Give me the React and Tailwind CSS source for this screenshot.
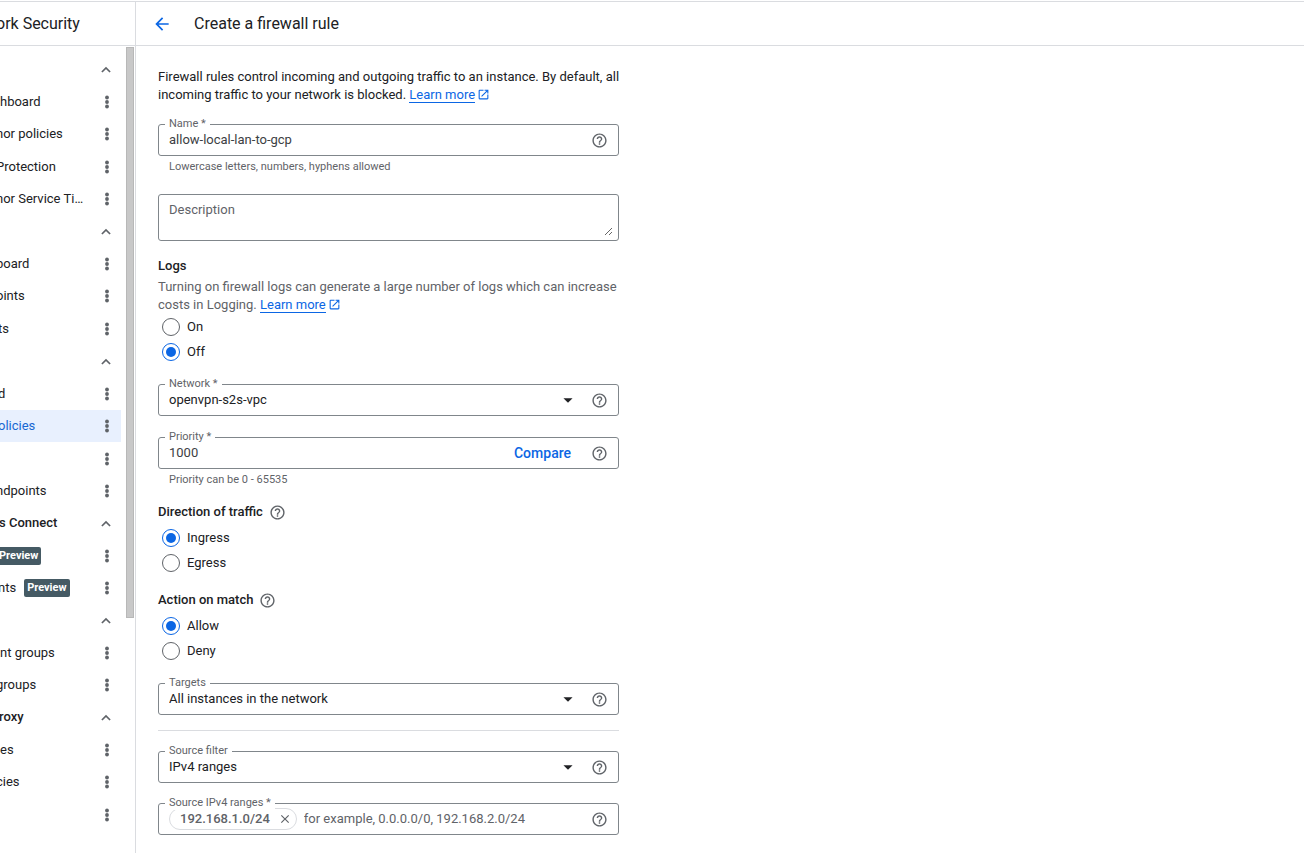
import { useState } from "react";
import { MdHelpOutline, MdArrowBack, MdOpenInNew, MdClose, MdArrowDropDown } from "react-icons/md";

const groups = [
  ["", [["hboard", "whole"], ["nor policies"], ["Protection"], ["nor Service Ti…"]]],
  ["", [["board"], ["oints"], ["ts"]]],
  ["", [["d"], ["olicies", "active"], [""], ["ndpoints"]]],
  ["s Connect", [["", "badge"], ["nts", "badge"]]],
  ["", [["nt groups", "whole"], ["groups"]]],
  ["roxy", [["es", "whole"], ["cies"], [""]]],
];

function MoreDots() {
  return (
    <svg width="18" height="18" viewBox="0 0 18 18" fill="currentColor" aria-hidden="true">
      <circle cx="9" cy="4.5" r="1.9" />
      <circle cx="9" cy="9" r="1.9" />
      <circle cx="9" cy="13.5" r="1.9" />
    </svg>
  );
}

function ChevronUp() {
  return (
    <svg width="16" height="16" viewBox="0 0 16 16" fill="none" stroke="currentColor" strokeWidth="1.7" aria-hidden="true">
      <path d="M3.9 11 8 6.9l4.1 4.1" />
    </svg>
  );
}

function Sidebar() {
  return (
    <aside className="flex w-[136px] shrink-0 flex-col overflow-hidden border-r border-[#dadce0]">
      <div className="flex h-11 items-center border-b border-[#dadce0]">
        <h2 className="-ml-1 whitespace-nowrap text-base">ork Security</h2>
      </div>
      <div className="flex justify-between">
        <nav className="w-[121px] overflow-hidden pt-[7px]" aria-label="Products">
          {groups.map(([title, items], g) => (
            <ul key={g}>
              <li className="flex h-8 items-center justify-between pr-[7px]">
                <h3 className="-ml-px font-medium">{title}</h3>
                <button type="button" aria-label="Collapse section" className="text-[#5f6368]">
                  <ChevronUp />
                </button>
              </li>
              {items.map(([label, kind], i) => (
                <li
                  key={i}
                  className={
                    "flex items-center justify-between pr-[5px] odd:h-8 even:h-[33px] " +
                    (kind === "active" ? "bg-[#e8f0fe] text-[#1967d2]" : "")
                  }
                >
                  <a
                    href="#"
                    className={
                      "flex items-center gap-2 whitespace-nowrap " +
                      (kind === "whole" ? "ml-0" : (kind || label.length < 3) && label ? "-ml-0.5" : "-ml-1")
                    }
                  >
                    {label && <span>{label}</span>}
                    {kind === "badge" && (
                      <span className="rounded-xs bg-[#455a64] px-[3px] text-[11px] font-bold leading-[18px] text-white">
                        Preview
                      </span>
                    )}
                  </a>
                  <button type="button" aria-label="More options" className="text-[#5f6368]">
                    <MoreDots />
                  </button>
                </li>
              ))}
            </ul>
          ))}
        </nav>
        <div className="mr-px mt-px h-[571px] w-2 border border-[#b8b8b8] bg-[#c8c8c8]" />
      </div>
    </aside>
  );
}

function Help() {
  return (
    <button type="button" aria-label="Help" className="shrink-0 text-[#5f6368]">
      <MdHelpOutline size={17} />
    </button>
  );
}

function LearnMore() {
  return (
    <a href="#" className="text-[#0b66e4]">
      <span className="border-b border-[#0b66e4]">Learn more</span>
      <MdOpenInNew size={13} className="ml-0.5 inline align-[-2px]" />
    </a>
  );
}

function Field({ id, label, hint, children }) {
  return (
    <div>
      <div className="relative flex h-8 items-center rounded-[3px] border border-[#80868b] px-2.5">
        <label htmlFor={id} className="absolute -top-2 left-1.5 bg-white px-1 text-[11px] leading-[14px] text-[#5f6368]">
          {label}
        </label>
        {children}
        <Help />
      </div>
      {hint && <p className="pl-[11px] pt-1 text-[11px] leading-[14px] text-[#5f6368]">{hint}</p>}
    </div>
  );
}

function SelectField({ id, label, value }) {
  return (
    <Field id={id} label={label}>
      <div className="relative mr-3 flex flex-1 items-center">
        <select id={id} className="w-full appearance-none bg-transparent outline-none">
          <option>{value}</option>
        </select>
        <MdArrowDropDown size={22} className="pointer-events-none absolute right-0" />
      </div>
    </Field>
  );
}

function RadioGroup({ name, options, initial }) {
  const [value, setValue] = useState(initial);
  return (
    <div className="flex flex-col gap-[7px] pl-1">
      {options.map((o) => (
        <label key={o} className="flex h-[18px] items-center gap-[7px]">
          <input
            type="radio"
            name={name}
            checked={value === o}
            onChange={() => setValue(o)}
            className="grid size-[18px] appearance-none place-content-center rounded-full border border-[#5f6368] checked:border-[#0b66e4] checked:before:size-2.5 checked:before:rounded-full checked:before:bg-[#0b66e4]"
          />
          {o}
        </label>
      ))}
    </div>
  );
}

export default function App() {
  return (
    <div className="flex min-h-screen bg-white pt-px font-[Roboto,sans-serif] text-[13px] leading-[18px] text-[#202124]">
      <div className="flex flex-1 border-t border-[#dadce0]">
        <Sidebar />
        <main className="min-w-0 flex-1">
          <header className="flex h-11 items-center gap-[22px] border-b border-[#dadce0] pl-4">
            <button type="button" aria-label="Back" className="text-[#0b66e4]">
              <MdArrowBack size={20} />
            </button>
            <h1 className="text-base">Create a firewall rule</h1>
          </header>
          <form className="w-full max-w-[483px] pl-[22px] pt-[22px]">
            <p className="sm:whitespace-nowrap">
              Firewall rules control incoming and outgoing traffic to an instance. By default, all
              <br /> incoming traffic to your network is blocked. <LearnMore />
            </p>
            <div className="pt-5">
              <Field id="name" label="Name *" hint="Lowercase letters, numbers, hyphens allowed">
                <input id="name" defaultValue="allow-local-lan-to-gcp" className="min-w-0 flex-1 text-[#3c4043] outline-none" />
              </Field>
            </div>
            <div className="mt-5 rounded-[3px] border border-[#80868b] pb-1 pl-2.5 pr-[5px] pt-1.5">
              <textarea
                aria-label="Description"
                placeholder="Description"
                className="block h-[35px] w-full outline-none placeholder:text-[#5f6368]"
              />
            </div>
            <h2 className="pt-4 font-medium">Logs</h2>
            <p className="pb-1 pt-[3px] text-[#5f6368]">
              Turning on firewall logs can generate a large number of logs which can increase costs in Logging.{" "}
              <LearnMore />
            </p>
            <RadioGroup name="logs" options={["On", "Off"]} initial="Off" />
            <div className="flex flex-col gap-[21px] pt-[23px]">
              <SelectField id="network" label="Network *" value="openvpn-s2s-vpc" />
              <Field id="priority" label="Priority *" hint="Priority can be 0 - 65535">
                <input id="priority" defaultValue="1000" className="min-w-0 flex-1 text-[#3c4043] outline-none" />
                <button type="button" className="mr-5 text-sm font-medium text-[#0b66e4]">
                  Compare
                </button>
              </Field>
            </div>
            <h2 className="flex items-center gap-1.5 pb-2 pt-4 font-medium">
              Direction of traffic <Help />
            </h2>
            <RadioGroup name="direction" options={["Ingress", "Egress"]} initial="Ingress" />
            <h2 className="flex items-center gap-1.5 pb-2 pt-[19px] font-medium">
              Action on match <Help />
            </h2>
            <RadioGroup name="action" options={["Allow", "Deny"]} initial="Allow" />
            <div className="border-b border-[#dadce0] pb-[15px] pt-[23px]">
              <SelectField id="targets" label="Targets" value="All instances in the network" />
            </div>
            <div className="flex flex-col gap-5 pt-5">
              <SelectField id="filter" label="Source filter" value="IPv4 ranges" />
              <Field id="ranges" label="Source IPv4 ranges *">
                <span className="mr-[7px] flex h-[22px] items-center gap-2 rounded-full border border-[#dadce0] pl-2.5 pr-1 font-medium text-[#5f6368]">
                  192.168.1.0/24
                  <button type="button" aria-label="Remove 192.168.1.0/24">
                    <MdClose size={14} />
                  </button>
                </span>
                <input
                  id="ranges"
                  placeholder="for example, 0.0.0.0/0, 192.168.2.0/24"
                  className="min-w-0 flex-1 outline-none placeholder:text-[#5f6368]"
                />
              </Field>
            </div>
          </form>
        </main>
      </div>
    </div>
  );
}
